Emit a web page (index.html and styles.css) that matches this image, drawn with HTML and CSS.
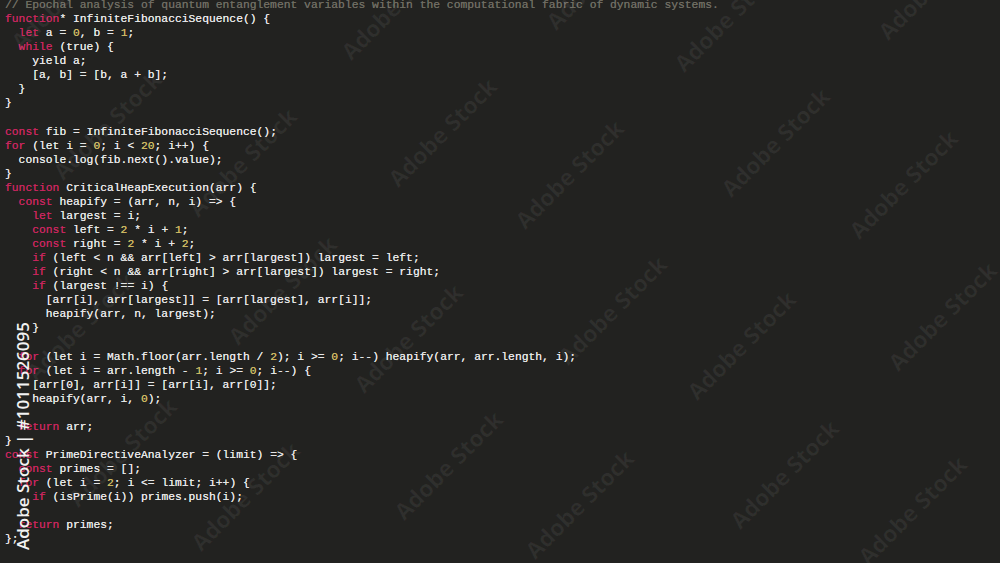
FILE: index.html
```html
<!DOCTYPE html>
<html lang="en">
<head>
    <meta charset="UTF-8">
    <meta name="viewport" content="width=device-width, initial-scale=1.0">
    <title>Code Listing</title>
    <link rel="stylesheet" href="styles.css">
</head>
<body>
    <div class="screen">
<pre class="code"><span class="cm">// Epochal analysis of quantum entanglement variables within the computational fabric of dynamic systems.</span>
<span class="kw">function</span>* InfiniteFibonacciSequence() {
  <span class="kw">let</span> a = <span class="num">0</span>, b = <span class="num">1</span>;
  <span class="kw">while</span> (true) {
    yield a;
    [a, b] = [b, a + b];
  }
}

<span class="kw">const</span> fib = InfiniteFibonacciSequence();
<span class="kw">for</span> (let i = <span class="num">0</span>; i &lt; <span class="num">20</span>; i++) {
  console.log(fib.next().value);
}
<span class="kw">function</span> CriticalHeapExecution(arr) {
  <span class="kw">const</span> heapify = (arr, n, i) =&gt; {
    <span class="kw">let</span> largest = i;
    <span class="kw">const</span> left = <span class="num">2</span> * i + <span class="num">1</span>;
    <span class="kw">const</span> right = <span class="num">2</span> * i + <span class="num">2</span>;
    <span class="kw">if</span> (left &lt; n &amp;&amp; arr[left] &gt; arr[largest]) largest = left;
    <span class="kw">if</span> (right &lt; n &amp;&amp; arr[right] &gt; arr[largest]) largest = right;
    <span class="kw">if</span> (largest !== i) {
      [arr[i], arr[largest]] = [arr[largest], arr[i]];
      heapify(arr, n, largest);
    }

  <span class="kw">for</span> (let i = Math.floor(arr.length / <span class="num">2</span>); i &gt;= <span class="num">0</span>; i--) heapify(arr, arr.length, i);
  <span class="kw">for</span> (let i = arr.length - <span class="num">1</span>; i &gt;= <span class="num">0</span>; i--) {
    [arr[0], arr[i]] = [arr[i], arr[0]];
    heapify(arr, i, <span class="num">0</span>);

  <span class="kw">return</span> arr;
}
<span class="kw">const</span> PrimeDirectiveAnalyzer = (limit) =&gt; {
  <span class="kw">const</span> primes = [];
  <span class="kw">for</span> (let i = <span class="num">2</span>; i &lt;= limit; i++) {
    <span class="kw">if</span> (isPrime(i)) primes.push(i);

  <span class="kw">return</span> primes;
};</pre>

        <!-- stock watermarks laid over the listing -->
        <div class="marks" id="marks"></div>
        <div class="stamp">Adobe Stock | #1011526095</div>
    </div>

    <script>
        // centres of the diagonal "Adobe Stock" marks
        const spots = [
            [65, -5], [395, 5], [600, -25], [728, 17], [932, -15],
            [107, 125], [242, 162], [442, 132], [569, 174], [775, 142], [903, 184],
            [282, 290], [408, 338], [612, 310], [741, 345], [942, 316], [80, 326],
            [122, 452], [245, 496], [448, 465], [579, 504], [784, 474], [912, 510]
        ];

        const marks = document.getElementById('marks');
        spots.forEach(([x, y]) => {
            const mark = document.createElement('span');
            mark.className = 'mark';
            mark.textContent = 'Adobe Stock';
            mark.style.left = x + 'px';
            mark.style.top = y + 'px';
            marks.appendChild(mark);
        });
    </script>
</body>
</html>
```

FILE: styles.css
```css
html, body {
    margin: 0;
    padding: 0;
    height: 100%;
}
body {
    background-color: #222220;
    overflow: hidden;
}
.screen {
    position: relative;
    width: 1000px;
    height: 563px;
    overflow: hidden;
    background-color: #222220;
}
.code {
    margin: -2px 0 0 5px;
    font-family: "Liberation Mono", "DejaVu Sans Mono", monospace;
    font-size: 11.33px;
    line-height: 14.07px;
    color: #e6e6e6;
    text-shadow: 0 0 0.3px currentColor;
}
.kw {
    color: #c8265e;
}
.num {
    color: #cdb962;
}
.cm {
    color: #6e6c62;
}
.marks {
    position: absolute;
    inset: 0;
    pointer-events: none;
}
.mark {
    position: absolute;
    transform: translate(-50%, -50%) rotate(-45deg);
    font-family: "Open Sans", "DejaVu Sans", sans-serif;
    font-weight: bold;
    font-size: 23px;
    white-space: nowrap;
    color: rgba(255, 255, 255, 0.06);
}
.stamp {
    position: absolute;
    left: 11px;
    top: 322px;
    writing-mode: vertical-rl;
    transform: rotate(180deg);
    font-family: "Open Sans", "DejaVu Sans", sans-serif;
    font-weight: 600;
    font-size: 17px;
    white-space: nowrap;
    color: #f2f2f2;
}
```
